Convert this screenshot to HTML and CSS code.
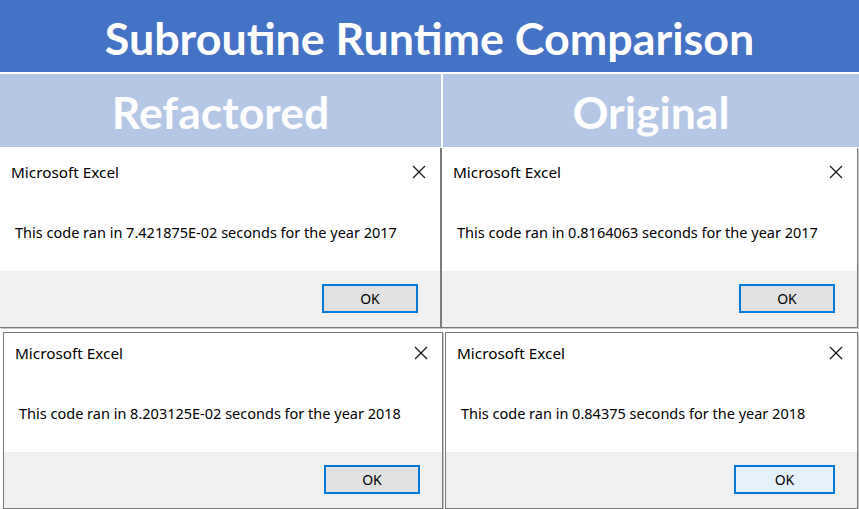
FILE: index.html
```html
<!DOCTYPE html>
<html>
<head>
<meta charset="utf-8">
<link rel="stylesheet" href="styles.css">
</head>
<body>
<div class="page">
  <div class="title">Subroutine Runtime Comparison</div>
  <div class="heads">
    <div class="head">Refactored</div>
    <div class="head">Original</div>
  </div>
  <div class="grid">
    <div class="dlg d1">
      <div class="dlg-top">
        <span class="dlg-title">Microsoft Excel</span>
        <svg class="x" width="14" height="14" viewBox="0 0 14 14"><path d="M1 1L13 13M13 1L1 13" stroke="#1a1a1a" stroke-width="1.3" fill="none"/></svg>
      </div>
      <div class="msg">This code ran in 7.421875E-02 seconds for the year 2017</div>
      <div class="foot"><button class="ok">OK</button></div>
    </div>
    <div class="dlg d2">
      <div class="dlg-top">
        <span class="dlg-title">Microsoft Excel</span>
        <svg class="x" width="14" height="14" viewBox="0 0 14 14"><path d="M1 1L13 13M13 1L1 13" stroke="#1a1a1a" stroke-width="1.3" fill="none"/></svg>
      </div>
      <div class="msg">This code ran in 0.8164063 seconds for the year 2017</div>
      <div class="foot"><button class="ok">OK</button></div>
    </div>
    <div class="dlg d3">
      <div class="dlg-top">
        <span class="dlg-title">Microsoft Excel</span>
        <svg class="x" width="14" height="14" viewBox="0 0 14 14"><path d="M1 1L13 13M13 1L1 13" stroke="#1a1a1a" stroke-width="1.3" fill="none"/></svg>
      </div>
      <div class="msg">This code ran in 8.203125E-02 seconds for the year 2018</div>
      <div class="foot"><button class="ok">OK</button></div>
    </div>
    <div class="dlg d4">
      <div class="dlg-top">
        <span class="dlg-title">Microsoft Excel</span>
        <svg class="x" width="14" height="14" viewBox="0 0 14 14"><path d="M1 1L13 13M13 1L1 13" stroke="#1a1a1a" stroke-width="1.3" fill="none"/></svg>
      </div>
      <div class="msg">This code ran in 0.84375 seconds for the year 2018</div>
      <div class="foot"><button class="ok hover">OK</button></div>
    </div>
  </div>
</div>
</body>
</html>
```
FILE: styles.css
```css
* { box-sizing: border-box; }
html, body { margin: 0; padding: 0; background: #ffffff; }
.page { width: 859px; height: 509px; overflow: hidden; font-family: "Open Sans", sans-serif; }
.title {
  height: 72px;
  background: #4472c4;
  color: #ffffff;
  font-family: "Lato", sans-serif;
  font-weight: 700;
  font-size: 44.8px;
  line-height: 76px;
  text-align: center;
}
.heads {
  margin-top: 2px;
  display: grid;
  grid-template-columns: 441px 416px;
  column-gap: 2px;
}
.head {
  height: 73px;
  background: #b4c7e7;
  color: #ffffff;
  font-family: "Lato", sans-serif;
  font-weight: 700;
  font-size: 44.5px;
  line-height: 76px;
  text-align: center;
}
.grid {
  display: grid;
  grid-template-columns: 441px 418px;
  grid-template-rows: 180px 177px;
  row-gap: 4px;
  padding-top: 1px;
}
.dlg {
  background: #ffffff;
  border: 1px solid #7a7a7a;
  box-shadow: 1px 1px 0 #c8c8c8;
  display: flex;
  flex-direction: column;
  font-family: "Noto Sans", sans-serif;
  color: #000000;
}
.d1 { border-left: none; border-top: none; padding-top: 4px; }
.d2 { border-top: none; width: 417px; padding-top: 4px; }
.d3 { margin-left: 3px; width: 440px; }
.d4 { margin-left: 4px; width: 413px; }
.dlg-top {
  height: 40px;
  display: flex;
  align-items: center;
  justify-content: space-between;
  padding: 0 14px 0 11px;
}
.dlg-title { font-size: 15.3px; }
.msg {
  font-size: 14.5px;
  line-height: 20px;
  padding: 30px 0 0 15px;
  height: 79px;
}
.foot {
  flex: 1;
  background: #f0f0f0;
  display: flex;
  justify-content: flex-end;
  align-items: flex-start;
  padding: 13px 22px 0 0;
}
.ok {
  width: 96px;
  height: 29px;
  border: 2px solid #0078d7;
  background: #e1e1e1;
  font-family: "Noto Sans", sans-serif;
  font-size: 14px;
  color: #000000;
  padding: 0;
}
.ok.hover { background: #e5f1fb; width: 101px; }
```
